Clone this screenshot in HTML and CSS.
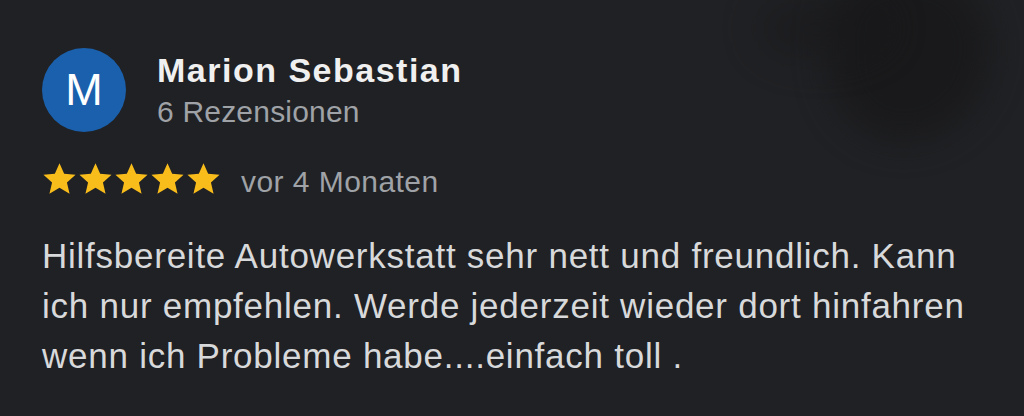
FILE: index.html
```html
<!DOCTYPE html>
<html lang="de">
<head>
<meta charset="utf-8">
<link rel="stylesheet" href="styles.css">
</head>
<body>
<div class="shade"></div>
<div class="shade shade-b"></div>
<main class="review">
  <header class="author">
    <div class="avatar">M</div>
    <div class="meta">
      <div class="name">Marion Sebastian</div>
      <div class="count">6 Rezensionen</div>
    </div>
  </header>
  <div class="rating">
    <div class="stars">
      <svg viewBox="0 0 24 24" class="star"><path d="M12 1.6l3.2 7.2 7.8.7-5.9 5.2 1.8 7.7L12 18.4l-6.9 4 1.8-7.7L1 9.5l7.8-.7z"/></svg>
      <svg viewBox="0 0 24 24" class="star"><path d="M12 1.6l3.2 7.2 7.8.7-5.9 5.2 1.8 7.7L12 18.4l-6.9 4 1.8-7.7L1 9.5l7.8-.7z"/></svg>
      <svg viewBox="0 0 24 24" class="star"><path d="M12 1.6l3.2 7.2 7.8.7-5.9 5.2 1.8 7.7L12 18.4l-6.9 4 1.8-7.7L1 9.5l7.8-.7z"/></svg>
      <svg viewBox="0 0 24 24" class="star"><path d="M12 1.6l3.2 7.2 7.8.7-5.9 5.2 1.8 7.7L12 18.4l-6.9 4 1.8-7.7L1 9.5l7.8-.7z"/></svg>
      <svg viewBox="0 0 24 24" class="star"><path d="M12 1.6l3.2 7.2 7.8.7-5.9 5.2 1.8 7.7L12 18.4l-6.9 4 1.8-7.7L1 9.5l7.8-.7z"/></svg>
    </div>
    <span class="date">vor 4 Monaten</span>
  </div>
  <p class="text">Hilfsbereite Autowerkstatt sehr nett und freundlich. Kann ich nur empfehlen. Werde jederzeit wieder dort hinfahren wenn ich Probleme habe....einfach toll .</p>
</main>
</body>
</html>
```
FILE: styles.css
```css
html, body {
  margin: 0;
  padding: 0;
  background: #202124;
  width: 1024px;
  height: 416px;
  overflow: hidden;
  font-family: "Liberation Sans", Arial, sans-serif;
}
body { position: relative; }
.shade {
  position: absolute;
  left: 830px;
  top: -30px;
  width: 160px;
  height: 170px;
  background: #18181a;
  border-radius: 40% 50% 60% 50%;
  filter: blur(18px);
  opacity: 0.85;
}
.shade-b {
  left: 760px;
  top: 0;
  width: 130px;
  height: 60px;
  opacity: 0.5;
}
.review {
  position: relative;
  padding: 48px 0 0 42px;
}
.author {
  display: flex;
  align-items: center;
  gap: 31px;
}
.avatar {
  width: 84px;
  height: 84px;
  border-radius: 50%;
  background: #1a60ad;
  color: #fff;
  font-size: 45px;
  display: flex;
  align-items: center;
  justify-content: center;
}
.meta { display: flex; flex-direction: column; gap: 4px; }
.name {
  color: #f0f0f0;
  font-weight: bold;
  font-size: 34px;
  line-height: 40px;
  letter-spacing: 1.5px;
}
.count {
  color: #9fa2a6;
  font-size: 30px;
  line-height: 36px;
  letter-spacing: 0.2px;
}
.rating {
  display: flex;
  align-items: flex-start;
  margin-top: 29px;
  gap: 20px;
}
.stars { display: flex; gap: 1px; }
.star { width: 35px; height: 35px; fill: #f9bd1b; }
.date {
  margin-top: 3px;
  color: #9fa2a6;
  font-size: 30px;
  line-height: 35px;
  letter-spacing: 0.45px;
}
.text {
  margin: 32px 0 0;
  width: 935px;
  color: #d8d9db;
  font-size: 35px;
  line-height: 50px;
  letter-spacing: 0.75px;
}
```
